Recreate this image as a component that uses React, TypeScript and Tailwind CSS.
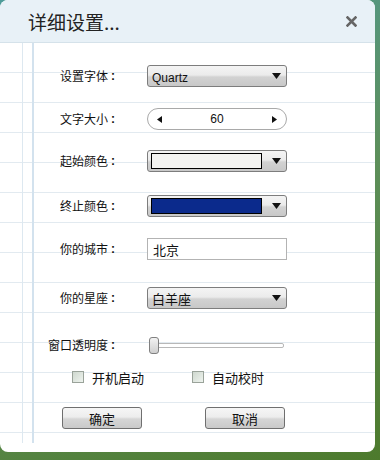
import React from "react";

const cjk = "font-['Noto_Sans_CJK_SC','Noto_Sans',sans-serif]";
const latin = "font-['Liberation_Sans','Noto_Sans_CJK_SC',sans-serif]";

function DownArrow() {
  return (
    <svg width="9" height="6" viewBox="0 0 9 6" className="shrink-0">
      <path d="M0 0 H9 L4.5 6 Z" fill="#111" />
    </svg>
  );
}

function Label({ text }: { text: string }) {
  return (
    <div className={`flex w-[120px] shrink-0 items-center justify-end text-[12px] leading-none text-[#111] ${cjk}`}>
      <span>{text}</span>
      <span className={`w-[12px] pl-[3px] text-left font-bold ${latin}`}>:</span>
    </div>
  );
}

function Row({ label, top, h = 22, children }: { label: string; top: string; h?: number; children: React.ReactNode }) {
  return (
    <div className={`flex items-center ${top}`} style={{ height: h }}>
      <Label text={label} />
      <div className="ml-[27px] w-[140px]">{children}</div>
    </div>
  );
}

function SelectBox({ children }: { children: React.ReactNode }) {
  return (
    <div className="flex h-[22px] items-center rounded-[3px] border border-[#7d7d7d] bg-[linear-gradient(to_bottom,#f4f4f4_0%,#ebebeb_45%,#d2d2d2_55%,#c8c8c8_100%)] pl-[4px] pr-[5px]">
      <div className="flex-1 overflow-hidden">{children}</div>
      <DownArrow />
    </div>
  );
}

function ColorSelect({ color }: { color: string }) {
  return (
    <div className="flex h-[22px] items-center rounded-[3px] border border-[#7d7d7d] bg-[linear-gradient(to_bottom,#f4f4f4_0%,#ebebeb_45%,#d2d2d2_55%,#c8c8c8_100%)] pl-[3px] pr-[5px]">
      <div className="h-[16px] w-[111px] border border-black" style={{ background: color }} />
      <div className="flex flex-1 justify-end">
        <DownArrow />
      </div>
    </div>
  );
}

function CheckBox({ label }: { label: string }) {
  return (
    <div className="flex items-center">
      <span className="h-[12px] w-[12px] border border-[#9aa39a] bg-[linear-gradient(135deg,#cfd8cf,#eef3ee)]" />
      <span className={`ml-[8px] text-[13px] leading-none text-[#111] ${cjk}`}>{label}</span>
    </div>
  );
}

function Btn({ text }: { text: string }) {
  return (
    <button className={`flex h-[22px] w-[80px] items-center justify-center rounded-[3px] border border-[#6f6f6f] bg-[linear-gradient(to_bottom,#f6f6f6_0%,#ededed_45%,#d6d6d6_55%,#c9c9c9_100%)] text-[13px] leading-none text-[#111] ${cjk}`}>
      {text}
    </button>
  );
}

export default function App() {
  return (
    <div className="h-[460px] w-[380px] overflow-hidden bg-[linear-gradient(160deg,#4f9c9a_0%,#5d8f5a_50%,#4d7a2d_100%)]">
      <div className="flex h-[452px] w-[375px] flex-col overflow-hidden rounded-[8px] bg-white">
        {/* header */}
        <div className="flex h-[43px] shrink-0 items-center justify-between border-b border-[#d5e2ea] bg-[#e8f1f7] pl-[28px] pr-[18px]">
          <span className={`text-[19px] leading-none text-[#222] ${cjk}`}>详细设置...</span>
          <svg width="11" height="11" viewBox="0 0 11 11">
            <path d="M1.5 1.5 L9.5 9.5 M9.5 1.5 L1.5 9.5" stroke="#666" strokeWidth="2.6" strokeLinecap="square" />
          </svg>
        </div>

        {/* body */}
        <div className="flex-1 [background-image:linear-gradient(to_right,transparent_22px,#dde8f0_22px,#dde8f0_23px,transparent_23px,transparent_32px,#d3e2ee_32px,#d3e2ee_34px,transparent_34px),repeating-linear-gradient(to_bottom,transparent_0,transparent_29px,#e2eaf0_29px,#e2eaf0_30px)] [background-size:100%_400px,100%_100%] bg-no-repeat">
          <Row label="设置字体" top="mt-[22px]">
            <SelectBox>
              <span className={`text-[12px] leading-none text-[#111] ${latin}`}>Quartz</span>
            </SelectBox>
          </Row>

          <Row label="文字大小" top="mt-[21px]">
            <div className="flex h-[22px] items-center justify-between rounded-full border border-[#a9a9a9] bg-white px-[9px]">
              <svg width="5" height="7" viewBox="0 0 5 7">
                <path d="M5 0 V7 L0 3.5 Z" fill="#111" />
              </svg>
              <span className={`text-[12px] leading-none text-[#111] ${latin}`}>60</span>
              <svg width="5" height="7" viewBox="0 0 5 7">
                <path d="M0 0 V7 L5 3.5 Z" fill="#111" />
              </svg>
            </div>
          </Row>

          <Row label="起始颜色" top="mt-[20px]">
            <ColorSelect color="#f3f3f1" />
          </Row>

          <Row label="终止颜色" top="mt-[23px]">
            <ColorSelect color="#0b2a8c" />
          </Row>

          <Row label="你的城市" top="mt-[21px]">
            <div className="flex h-[22px] items-center border border-[#b3b3b3] bg-white pl-[5px]">
              <span className={`text-[13px] leading-none text-[#111] ${cjk}`}>北京</span>
            </div>
          </Row>

          <Row label="你的星座" top="mt-[27px]">
            <SelectBox>
              <span className={`text-[13px] leading-none text-[#111] ${cjk}`}>白羊座</span>
            </SelectBox>
          </Row>

          <div className="mt-[25px] flex h-[22px] items-center">
            <Label text="窗口透明度" />
            <div className="relative ml-[29px] flex h-[17px] w-[135px] items-center">
              <div className="h-[5px] w-full rounded-[2px] border border-[#b8b8b8] bg-white" />
              <div className="absolute left-0 top-0 h-[17px] w-[10px] rounded-[3px] border border-[#808080] bg-[linear-gradient(to_bottom,#f2f2f2,#cfcfcf)]" />
            </div>
          </div>

          <div className="mt-[13px] flex h-[16px] items-center">
            <div className="ml-[72px] w-[120px]">
              <CheckBox label="开机启动" />
            </div>
            <CheckBox label="自动校时" />
          </div>

          <div className="mt-[22px] flex items-center">
            <div className="ml-[62px]">
              <Btn text="确定" />
            </div>
            <div className="ml-[63px]">
              <Btn text="取消" />
            </div>
          </div>
        </div>
      </div>
    </div>
  );
}
